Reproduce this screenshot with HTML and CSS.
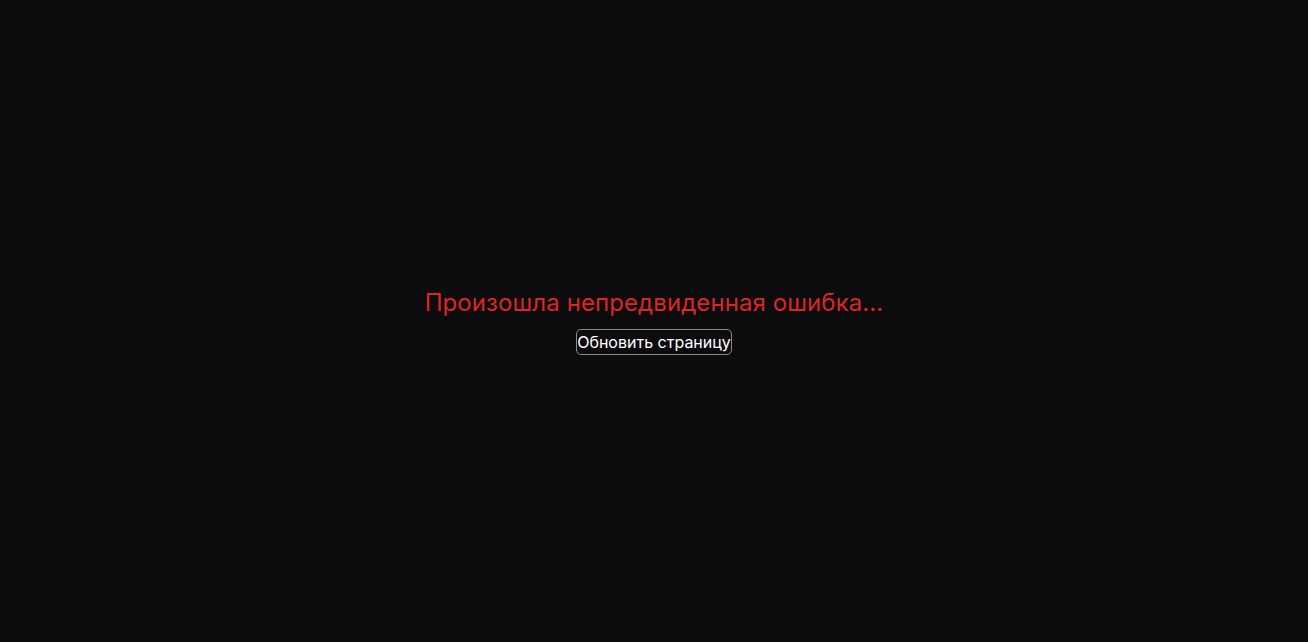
FILE: index.html
```html
<!DOCTYPE html>
<html lang="ru">
<head>
<meta charset="utf-8">
<title>Ошибка</title>
<link rel="stylesheet" href="styles.css">
</head>
<body>
<main class="error">
  <h1 class="error__title">Произошла непредвиденная ошибка...</h1>
  <button class="error__btn" type="button">Обновить страницу</button>
</main>
</body>
</html>
```
FILE: styles.css
```css
html, body {
  margin: 0;
  height: 100%;
}
body {
  background: #0c0c0e;
  font-family: Inter, "Noto Sans", sans-serif;
  color: #fff;
}
.error {
  height: 100%;
  display: flex;
  flex-direction: column;
  align-items: center;
  justify-content: center;
  gap: 10px;
}
.error__title {
  margin: 0;
  font-size: 24px;
  line-height: 32px;
  font-weight: 400;
  letter-spacing: 0.09px;
  color: #dc2626;
}
.error__btn {
  font-family: Inter, "Noto Sans", sans-serif;
  font-size: 16px;
  line-height: 24px;
  color: #fff;
  background: transparent;
  border: 1px solid #8a8a8a;
  border-radius: 5px;
  padding: 0;
  cursor: pointer;
}
```
